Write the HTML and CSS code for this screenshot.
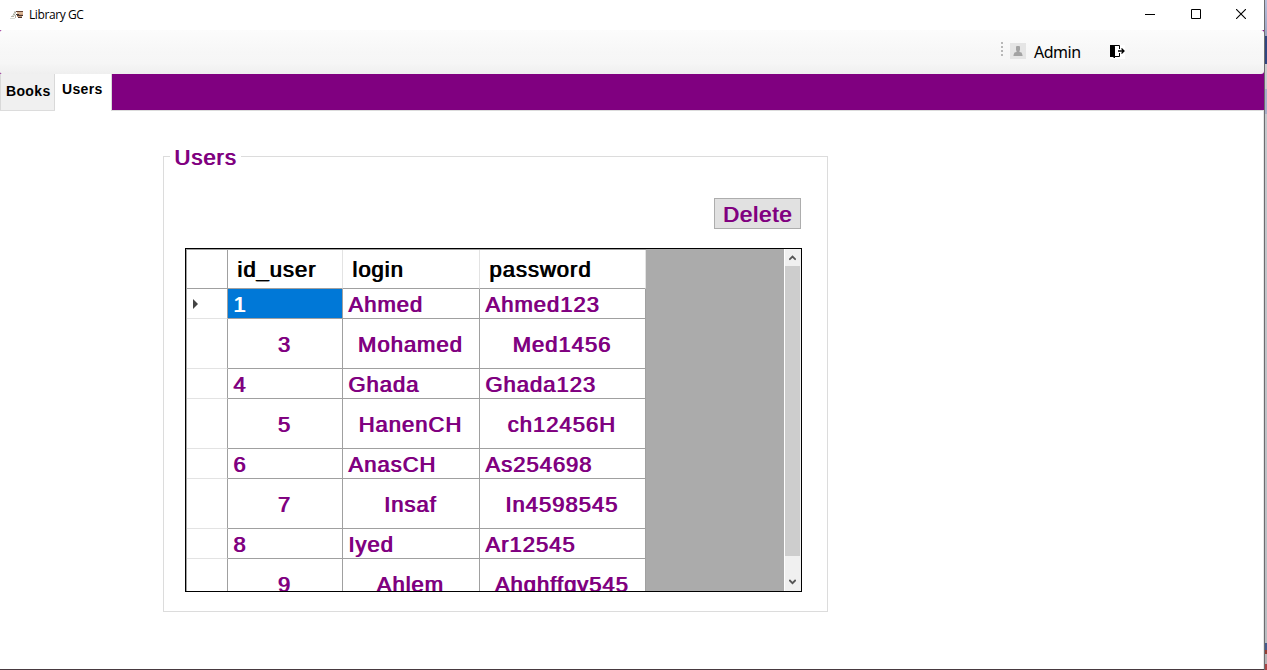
FILE: index.html
```html
<!DOCTYPE html>
<html lang="en">
<head>
<meta charset="utf-8">
<title>Library GC</title>
<link rel="stylesheet" href="styles.css">
</head>
<body>
<div class="desktop">
  <main class="window">
    <header class="titlebar">
      <svg class="app-icon" width="14" height="10" viewBox="0 0 14 10" shape-rendering="crispEdges">
        <path d="M4 1h3v1H4zM3 3h3v1H3zM2 5h3v1H2zM0 8h5v1H0z" fill="#d5dad3"/>
        <path d="M4 2h2v1H4zM3 4h2v1H3zM1 6h3v1H1zM5 5h1v3H5z" fill="#b3b1a5"/>
        <path d="M6 1h7v1H6z" fill="#694536"/><path d="M7 2h6v2H7z" fill="#d8b595"/>
        <path d="M6 4h3v1H6zM7 5h6v1H7zM8 7h4v1H8z" fill="#49372f"/>
        <path d="M9 4h4v1H9zM7 6h5v1H7z" fill="#c79b7c"/>
      </svg>
      <h1 class="title">Library GC</h1>
      <div class="controls">
        <svg width="10" height="10" viewBox="0 0 10 10"><path d="M0 5.5h10" stroke="#000"/></svg>
        <svg width="10" height="10" viewBox="0 0 10 10"><path d="M.5.5h9v9h-9z" fill="none" stroke="#000"/></svg>
        <svg width="10" height="10" viewBox="0 0 10 10"><path d="M0 0l10 10M10 0L0 10" stroke="#000" stroke-width="1.1"/></svg>
      </div>
    </header>
    <div class="toolbar-frame">
    <div class="toolbar">
      <span class="grip"></span>
      <svg class="user-icon" width="16" height="16" viewBox="0 0 16 16">
        <path d="M0 0h16v16H0z" fill="#e5e5e5"/>
        <path d="M6.500 3h3l.5 1v3l-.5 1v1l2 .5 1 2.500v1h-9v-1l1-2.500 2-.5V8L6 7V4z" fill="#a3a3a3"/>
      </svg>
      <span class="account">Admin</span>
      <svg class="exit-icon" width="15" height="14" viewBox="0 0 15 14">
        <path d="M0 0h15v14H0z" fill="#fff"/>
        <path d="M0 .5h9.500V4M9.500 8v3.500H5M0 .5V11" fill="none" stroke="#000"/>
        <path d="M0 0h4l1 1.500V13H4L3 12H0z" fill="#000"/>
        <path d="M8 6h6M11.500 3.500L14 6l-2.500 2.500" fill="none" stroke="#000" stroke-width="1.300"/>
      </svg>
    </div>
    </div>
    <nav class="tabs">
      <span class="tab">Books</span>
      <span class="tab tab-active">Users</span>
    </nav>
    <section class="page">
      <section class="group">
        <h2 class="legend">Users</h2>
        <button class="delete" type="button">Delete</button>
        <div class="datagrid">
          <div class="rows">
            <div class="row head"><span></span><span>id_user</span><span>login</span><span>password</span></div>
            <div class="row"><span class="marker"><svg width="6" height="10" viewBox="0 0 6 10"><path d="M0 0l5 5-5 5z" fill="#444"/></svg></span><span class="selected">1</span><span>Ahmed</span><span>Ahmed123</span></div>
            <div class="row tall"><span></span><span>3</span><span>Mohamed</span><span>Med1456</span></div>
            <div class="row"><span></span><span>4</span><span>Ghada</span><span>Ghada123</span></div>
            <div class="row tall"><span></span><span>5</span><span>HanenCH</span><span>ch12456H</span></div>
            <div class="row"><span></span><span>6</span><span>AnasCH</span><span>As254698</span></div>
            <div class="row tall"><span></span><span>7</span><span>Insaf</span><span>In4598545</span></div>
            <div class="row"><span></span><span>8</span><span>Iyed</span><span>Ar12545</span></div>
            <div class="row tall"><span></span><span>9</span><span>Ahlem</span><span>Ahghffgy545</span></div>
          </div>
          <div class="scrollbar">
            <svg width="7" height="6" viewBox="0 0 7 6"><path d="M.3 4.700l3.200-3.200 3.200 3.200" fill="none" stroke="#555" stroke-width="1.800"/></svg>
            <div class="thumb"></div>
            <svg width="7" height="6" viewBox="0 0 7 6"><path d="M.3 1l3.200 3.200L6.700 1" fill="none" stroke="#555" stroke-width="1.800"/></svg>
          </div>
        </div>
      </section>
    </section>
  </main>
  <aside class="backdrop"></aside>
</div>
</body>
</html>
```
FILE: styles.css
```css
* { box-sizing: border-box; }
body { margin: 0; overflow: hidden; font-family: "Liberation Sans", Arial, sans-serif; }
svg { display: block; flex: none; }
.desktop { display: flex; width: 1267px; height: 670px; }
.window { display: flex; flex-direction: column; width: 1264px; border-bottom: 1px solid #473a40; background: #fff; }
.backdrop {
  width: 3px;
  border-left: 1px solid #6d6d70;
  background: linear-gradient(#b9bfdb 0, #9ca4c4 36px, #30457f 36px, #30457f 64px, #cbcbcd 64px, #cbcbcd 89px, #a7afc8 89px, #a7afc8 114px, #c5c8cc 114px, #b9bdc1 643px, #455b8d 643px, #455b8d 650px, #913f35 650px, #913f35 654px, #b5b2b4 654px, #b5b2b4 664px, #a94444 664px);
}

.titlebar { display: flex; align-items: center; height: 30px; padding-left: 10px; }
.title { margin: 0 0 0 5px; font: 400 12px/16px "Open Sans", sans-serif; letter-spacing: -0.4px; }
.controls { display: flex; gap: 35.5px; margin: -2px 18px 0 auto; }

.toolbar-frame { height: 44px; background: #800080; }
.toolbar {
  display: flex;
  height: 44px;
  padding-left: 1001px;
  border-radius: 2px 3px 3px 2px;
  background: linear-gradient(#fcfcfc, #f7f7f7 50%, #f6f6f6 75%, #efefef);
}
.grip { width: 2px; height: 14px; margin-top: 12px; background: repeating-linear-gradient(#b8b8b8 0 2px, transparent 2px 4px); }
.user-icon { margin: 13px 0 0 7px; }
.account { width: 76px; margin: 11px 0 0 8px; font: 400 16px/23px "Noto Sans", sans-serif; letter-spacing: -0.5px; }
.exit-icon { margin-top: 15px; }

.tabs {
  display: flex;
  height: 37px;
  border-bottom: 1px solid #dcdcdc;
  background: #800080;
  font-size: 14px;
  font-weight: 700;
  line-height: 16px;
  letter-spacing: 0.35px;
}
.tab { width: 55px; padding: 9px 0 0 5px; border: solid #d9d9d9; border-width: 0 1px; background: #f0f0f0; }
.tab-active { width: 57px; height: 37px; padding: 7px 0 0 7px; border-left: 0; background: #fff; }

.page { flex: 1; padding: 45px 0 0 163px; background: #fff; border-right: 1px solid #e8e8e8; }
.group {
  display: flex;
  flex-direction: column;
  width: 665px;
  height: 456px;
  border: 1px solid #dcdcdc;
  font-size: 22px;
  letter-spacing: 1px;
  color: #800080;
  text-shadow: 1px 0 currentColor;
}
.legend { width: 71px; height: 24px; margin: -12px 0 0 6px; padding-left: 4px; background: #fff; font-size: 22px; font-weight: 400; line-height: 26px; }
.delete {
  width: 87px;
  height: 31px;
  margin: 29px 0 0 550px;
  padding: 2px 0 0;
  border: 1px solid #adadad;
  background: #e1e1e1;
  color: inherit;
  font: inherit;
  letter-spacing: inherit;
  text-shadow: inherit;
}
.datagrid { display: flex; width: 617px; height: 344px; margin: 19px 0 0 21px; border: 1px solid #000; background: #ababab; overflow: hidden; }
.rows { width: 460px; border: solid #a0a0a0; border-width: 1px 0 0 1px; }
.row { display: grid; grid-template-columns: 41px 115px 137px 166px; height: 30px; line-height: 27px; background: #fff; }
.row span { padding: 2px 0 0 5px; border: solid #a0a0a0; border-width: 0 1px 1px 0; white-space: nowrap; }
.row span:first-child { border-bottom-color: #e3e3e3; }
.row .marker { padding: 10px 0 0 6px; }
.row .selected { background: #0078d7; color: #fff; }
.row.head { height: 39px; line-height: 37px; color: #000; }
.row.head span { height: 39px; padding: 1px 0 0 9px; border-right-color: #e3e3e3; }
.row.head span:first-child { border-color: #a0a0a0; }
.row.tall { height: 50px; line-height: 47px; text-align: center; }
.row.tall span { padding: 2px 2px 0 0; }
.scrollbar {
  display: flex;
  flex-direction: column;
  align-items: center;
  width: 17px;
  margin-left: auto;
  padding: 6px 1px 6px 0;
  border-left: 1px solid #fff;
  background: #f0f0f0;
}
.thumb { width: 15px; height: 290px; margin: 5px 0 auto; background: #cdcdcd; }
```
